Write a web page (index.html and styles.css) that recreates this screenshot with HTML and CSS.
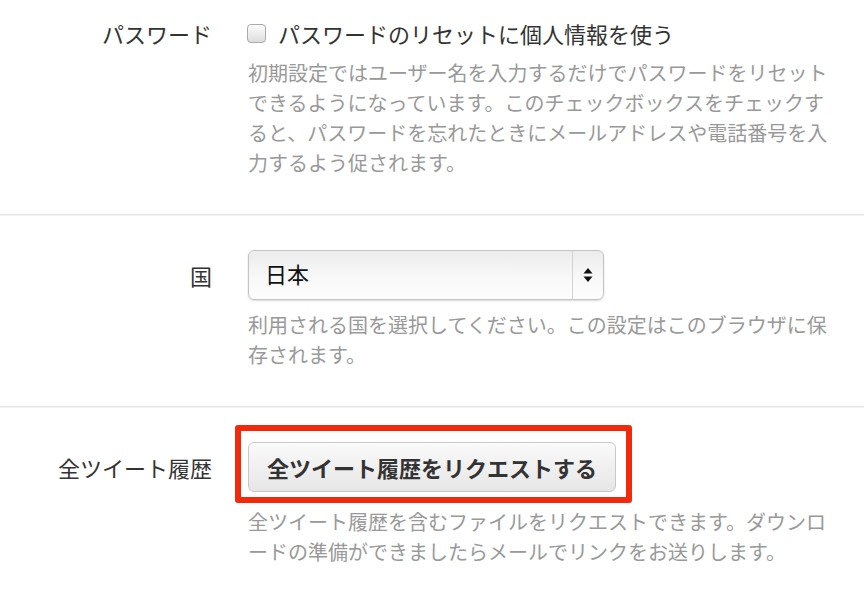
FILE: index.html
```html
<!DOCTYPE html>
<html lang="ja">
<head>
    <meta charset="UTF-8">
    <meta name="viewport" content="width=device-width, initial-scale=1.0">
    <title>設定</title>
    <link rel="stylesheet" href="styles.css">
</head>
<body>
    <div class="settings">
        <!-- パスワード -->
        <div class="row first">
            <div class="label short">パスワード</div>
            <div class="field">
                <label class="check">
                    <span class="box"></span>
                    <span>パスワードのリセットに個人情報を使う</span>
                </label>
                <p class="help">初期設定ではユーザー名を入力するだけでパスワードをリセットできるようになっています。このチェックボックスをチェックすると、パスワードを忘れたときにメールアドレスや電話番号を入力するよう促されます。</p>
            </div>
        </div>
        <!-- 国 -->
        <div class="row">
            <div class="label tall">国</div>
            <div class="field">
                <div class="select">
                    <span class="value">日本</span>
                    <span class="arrows">
                        <svg width="10" height="16" viewBox="0 0 10 16"><path d="M5 1 L9.5 6.5 L0.5 6.5 Z M5 15 L9.5 9.5 L0.5 9.5 Z" fill="#111"/></svg>
                    </span>
                </div>
                <p class="help">利用される国を選択してください。この設定はこのブラウザに保存されます。</p>
            </div>
        </div>
        <!-- 全ツイート履歴 -->
        <div class="row">
            <div class="label tall">全ツイート履歴</div>
            <div class="field">
                <div class="marked">
                    <button class="btn">全ツイート履歴をリクエストする</button>
                </div>
                <p class="help">全ツイート履歴を含むファイルをリクエストできます。ダウンロードの準備ができましたらメールでリンクをお送りします。</p>
            </div>
        </div>
    </div>
</body>
</html>
```

FILE: styles.css
```css
body{
    margin: 0;
    background: #fff;
    font-family: "Noto Sans CJK JP", "Noto Sans", sans-serif;
    color: #333;
}
.settings{
    width: 864px;
}
.row{
    display: grid;
    grid-template-columns: 212px 590px;
    column-gap: 36px;
    padding-top: 35px;
    padding-bottom: 36px;
    border-top: 1px solid #e4e4e4;
    box-shadow: inset 0 1px 0 #f4f4f4;
}
.row.first{
    padding-top: 18px;
    border-top: none;
    box-shadow: none;
}
.label{
    text-align: right;
    font-size: 22px;
    color: #333;
}
.label.short{
    line-height: 30px;
}
.label.tall{
    line-height: 50px;
}
.field{
    min-width: 0;
}
.check{
    display: flex;
    align-items: center;
    gap: 12px;
    font-size: 22px;
    line-height: 30px;
    color: #333;
}
.box{
    width: 17px;
    height: 17px;
    border: 1px solid #a9a9a9;
    border-radius: 4px;
    background: linear-gradient(#fdfdfd, #dcdcdc);
    box-shadow: inset 0 1px 1px rgba(255,255,255,0.8);
    margin-left: -1px;
}
.help{
    margin: 10px 0 0 0;
    font-size: 20px;
    line-height: 30px;
    color: #999;
    line-break: loose;
}
.select{
    display: flex;
    width: 354px;
    height: 48px;
    border: 1px solid #c4c4c4;
    border-radius: 6px;
    background: linear-gradient(#ececec, #f8f8f8 55%, #fdfdfd);
    box-shadow: 0 1px 2px rgba(0,0,0,0.15);
    font-size: 22px;
    color: #111;
}
.select .value{
    flex: 1;
    padding-left: 16px;
    line-height: 44px;
}
.select .arrows{
    width: 30px;
    border-left: 1px solid #d2d2d2;
    display: flex;
    align-items: center;
    justify-content: center;
}
.marked{
    position: relative;
    display: inline-block;
}
.marked::after{
    content: "";
    position: absolute;
    top: -17px;
    left: -13px;
    right: -16px;
    bottom: -11px;
    border: 6px solid #f2290d;
    border-radius: 3px;
    pointer-events: none;
}
.btn{
    display: block;
    width: 368px;
    height: 50px;
    padding: 0;
    border: 1px solid #c8c8c8;
    border-radius: 6px;
    background: linear-gradient(#fafafa, #e6e6e6);
    box-shadow: inset 0 1px 0 #fff;
    font-family: "Noto Sans CJK JP", "Noto Sans", sans-serif;
    font-size: 22px;
    font-weight: bold;
    color: #333;
    text-align: center;
}
.marked + .help{
    margin-top: 15px;
}
```
